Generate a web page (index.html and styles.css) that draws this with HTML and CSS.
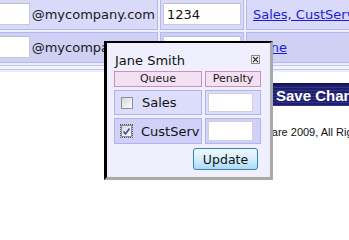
FILE: index.html
```html
<!DOCTYPE html>
<html>
<head>
<meta charset="utf-8">
<link rel="stylesheet" href="styles.css">
</head>
<body>
<div class="page">
  <table class="grid">
    <tr class="r1">
      <td class="c1"><div class="cellflex"><input class="txt w1" type="text" value=""><span class="domain">@mycompany.com</span></div></td>
      <td class="c2"><input class="txt w2" type="text" value="1234"></td>
      <td class="c3"><a href="#" class="link">Sales, CustServ</a></td>
    </tr>
    <tr class="r2">
      <td class="c1"><div class="cellflex"><input class="txt w1" type="text" value=""><span class="domain">@mycompany.com</span></div></td>
      <td class="c2"><input class="txt w2" type="text" value="5678"></td>
      <td class="c3"><a href="#" class="link">None</a></td>
    </tr>
    <tr class="r3">
      <td class="c1 blank"></td>
      <td class="c2 blank"></td>
      <td class="c3 blank"></td>
    </tr>
  </table>
  <div class="actions"><button class="save">Save Changes</button></div>
  <div class="footer">Copyright © Software 2009, All Rights Reserved</div>

  <div class="popup">
    <div class="pop-head">
      <span class="pop-title">Jane Smith</span>
      <span class="close"><svg width="9" height="9" viewBox="0 0 9 9"><rect x="0.5" y="0.5" width="8" height="8" fill="#f2f2f2" stroke="#8a8a8a"/><path d="M2 2 L7 7 M7 2 L2 7" stroke="#333" stroke-width="1.1"/></svg></span>
    </div>
    <table class="queues">
      <tr>
        <th class="qh">Queue</th>
        <th class="ph">Penalty</th>
      </tr>
      <tr class="q1">
        <td class="qc"><div class="qrow"><span class="cb"></span><span class="qname">Sales</span></div></td>
        <td class="pc"><input class="pen" type="text"></td>
      </tr>
      <tr class="q2">
        <td class="qc"><div class="qrow"><span class="cb checked"><svg width="9" height="9" viewBox="0 0 9 9"><path d="M1.5 4.5 L3.5 7 L7.5 1.5" fill="none" stroke="#3a4ea8" stroke-width="1.6"/></svg></span><span class="qname">CustServ</span></div></td>
        <td class="pc"><input class="pen" type="text"></td>
      </tr>
    </table>
    <div class="pop-foot"><button class="update">Update</button></div>
  </div>
</div>
</body>
</html>
```
FILE: styles.css
```css
html, body {
  margin: 0;
  padding: 0;
  overflow: hidden;
  background: #ffffff;
}
.page {
  position: relative;
  width: 700px;
  height: 200px;
  font-family: "DejaVu Sans", Verdana, sans-serif;
  color: #1a1a1a;
}
.grid {
  border-collapse: separate;
  border-spacing: 2px;
  background: #eeeefd;
  margin-left: -40px;
  margin-top: -3px;
  font-size: 13px;
}
.grid td {
  border: 1px solid #b6b6f0;
  padding: 3px 2px 4px 2px;
  vertical-align: middle;
}
.r1 td { background: #d9d9f9; }
.r2 td { background: #d0d0f5; }
.r3 td.blank {
  background: #f4f4ff;
  height: 3px;
  padding: 0;
  border-color: #c4c4f4;
}
.c1 { width: 190px; }
.c2 { width: 78px; }
.c3 { width: 200px; padding-left: 6px !important; }
.cellflex {
  display: flex;
  align-items: center;
  justify-content: flex-end;
}
.txt {
  box-sizing: border-box;
  height: 22px;
  border: 1px solid #c9c9d6;
  border-top-color: #bdbdcc;
  background: #fff;
  font-family: "DejaVu Sans", Verdana, sans-serif;
  font-size: 13px;
  color: #111;
  padding: 1px 3px;
  margin: 0;
  display: block;
}
.w1 { width: 64px; }
.w2 { width: 78px; }
.domain {
  margin-left: 2px;
  white-space: nowrap;
}
.link {
  color: #1c1ce0;
  text-decoration: underline;
  white-space: nowrap;
}
.actions {
  margin-top: 11px;
  padding-left: 266px;
}
.save {
  height: 23px;
  width: 120px;
  border: 0;
  border-top: 2px solid #14145a;
  padding: 0 0 0 10px;
  text-align: left;
  color: #fff;
  font-family: "Liberation Sans", Arial, sans-serif;
  font-weight: bold;
  font-size: 15px;
  white-space: nowrap;
  background: repeating-linear-gradient(to bottom, #1e1e6c 0px, #1e1e6c 2px, #34348a 2px, #34348a 3px);
}
.footer {
  margin-top: 20px;
  padding-left: 183px;
  font-family: "Liberation Sans", Arial, sans-serif;
  font-size: 11px;
  color: #111;
  white-space: nowrap;
}
.popup {
  position: absolute;
  left: 104px;
  top: 44px;
  width: 169px;
  height: 139px;
  box-sizing: border-box;
  border-style: solid;
  border-width: 2px 3px 3px 3px;
  border-color: #000 #a9a9a9 #a9a9a9 #000;
  background: #efeffd;
}
.pop-head {
  display: flex;
  align-items: center;
  justify-content: space-between;
  padding: 10px 10px 0 8px;
  height: 16px;
  line-height: 16px;
}
.pop-title {
  font-size: 13px;
  color: #111;
}
.close {
  display: block;
  width: 9px;
  height: 9px;
  margin-top: -4px;
}
.close svg { display: block; }
.queues {
  border-collapse: separate;
  border-spacing: 3px;
  margin-left: 4px;
  margin-top: -1px;
  width: 153px;
  table-layout: fixed;
}
.queues th {
  font-weight: normal;
  font-size: 11px;
  height: 14px;
  padding: 0;
  line-height: 14px;
  background: #f3e1f1;
  border: 1px solid #c98fc6;
  color: #1a1a1a;
}
.qh { width: 86px; }
.ph { width: 54px; }
.queues td {
  border: 1px solid #b2b2f0;
  padding: 2px;
}
.q1 td { background: #dcdcfb; height: 19px; }
.q2 td { background: #d0d0f8; height: 20px; }
.qc { padding-left: 6px !important; }
.qrow {
  display: flex;
  align-items: center;
}
.cb {
  box-sizing: border-box;
  width: 12px;
  height: 12px;
  border: 1px solid #8f8f99;
  background: linear-gradient(135deg, #d8d8dc, #fbfbfb);
  display: flex;
  align-items: center;
  justify-content: center;
}
.cb.checked {
  outline: 1px dotted #555;
  outline-offset: 0px;
}
.cb svg { display: block; }
.qname {
  margin-left: 9px;
  font-size: 13px;
  color: #111;
  white-space: nowrap;
}
.pen {
  box-sizing: border-box;
  width: 45px;
  height: 100%;
  min-height: 19px;
  border: 1px solid #cfcfe0;
  background: #fff;
  display: block;
  margin: 0;
}
.q2 .pen { min-height: 20px; }
.pop-foot {
  display: flex;
  justify-content: flex-end;
  padding-right: 12px;
  margin-top: 1px;
}
.update {
  box-sizing: border-box;
  width: 65px;
  height: 22px;
  border: 1px solid #3c7fb1;
  border-radius: 3px;
  background: linear-gradient(to bottom, #eef7fd 0%, #d6eefb 50%, #a9dbf6 100%);
  font-family: "DejaVu Sans", Verdana, sans-serif;
  font-size: 12.5px;
  color: #111;
  padding: 0;
}
```
